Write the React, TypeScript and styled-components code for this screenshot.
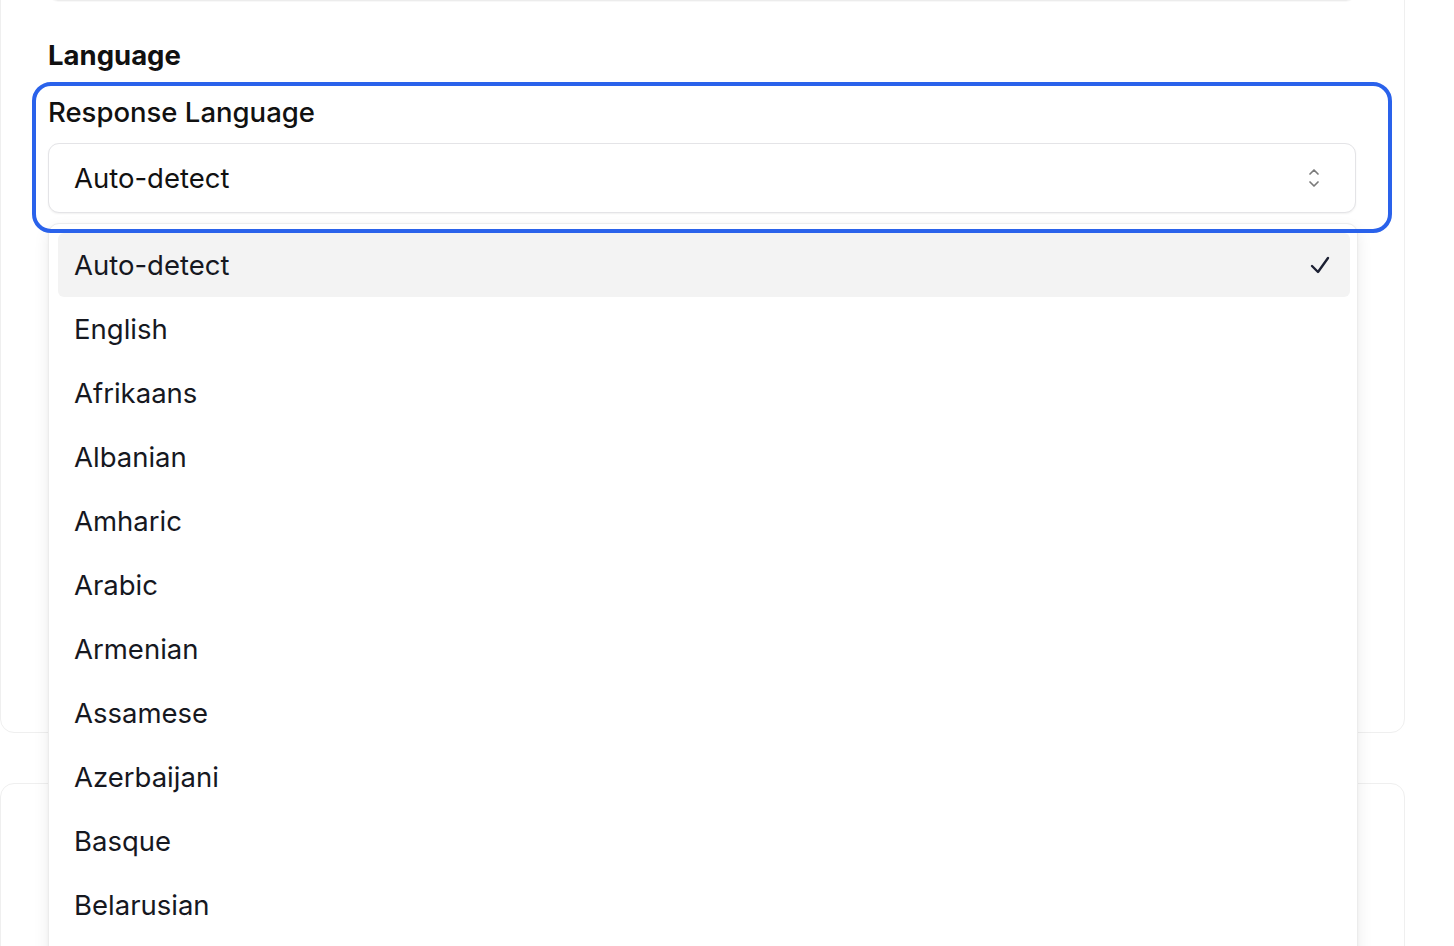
import React from "react";
import styled, { createGlobalStyle } from "styled-components";

const GlobalStyle = createGlobalStyle`
  html, body {
    margin: 0;
    padding: 0;
    background: #ffffff;
    overflow: hidden;
    font-family: Inter, "Noto Sans", "Liberation Sans", sans-serif;
    -webkit-font-smoothing: antialiased;
  }
  * { box-sizing: border-box; }
`;

const Page = styled.div`
  display: flex;
  flex-direction: column;
  gap: 50px;
  padding-right: 49px;
`;

const Card = styled.section<{ $pullUp?: number; $minHeight?: number }>`
  position: relative;
  margin-top: ${(p) => (p.$pullUp ? -p.$pullUp : 0)}px;
  min-height: ${(p) => p.$minHeight ?? 0}px;
  border: 1px solid #efefef;
  border-radius: 14px;
  background: #ffffff;
  padding: 0 48px 0 47px;
  display: flex;
  flex-direction: column;
`;

const PrevInput = styled.div`
  margin-top: 40px;
  height: 60px;
  border: 1px solid #ececec;
  border-radius: 10px;
  box-shadow: 0 1px 1px rgba(0, 0, 0, 0.03);
`;

const SectionTitle = styled.h3`
  margin: 39px 0 0;
  height: 30px;
  line-height: 30px;
  font-size: 27.5px;
  font-weight: 700;
  color: #111111;
`;

const FieldGroup = styled.div`
  position: relative;
  margin: 12px -36px 0 -16px;
  padding: 15px 36px 20px 16px;
  display: flex;
  flex-direction: column;
  gap: 16px;

  &::after {
    content: "";
    position: absolute;
    inset: 0;
    border: 4px solid #2a62eb;
    border-radius: 19px;
    pointer-events: none;
    z-index: 2;
  }
`;

const FieldLabel = styled.label`
  height: 30px;
  line-height: 30px;
  font-size: 27.5px;
  font-weight: 500;
  color: #111111;
`;

const SelectWrap = styled.div`
  position: relative;
`;

const SelectTrigger = styled.button`
  width: 100%;
  height: 70px;
  display: flex;
  align-items: center;
  justify-content: space-between;
  padding: 0 35px 0 25px;
  background: #ffffff;
  border: 1.5px solid #e4e4e7;
  border-radius: 11px;
  box-shadow: 0 1px 2px rgba(0, 0, 0, 0.06);
  font-family: inherit;
  font-size: 27.5px;
  line-height: 30px;
  font-weight: 400;
  color: #111111;
  text-align: left;
`;

const Listbox = styled.ul`
  position: absolute;
  top: calc(100% + 10px);
  left: 0;
  right: -2px;
  z-index: 1;
  min-height: 760px;
  margin: 0;
  padding: 9px 7px 9px 9px;
  list-style: none;
  background: #ffffff;
  border: 1px solid #ececec;
  border-radius: 11px;
  box-shadow: 0 6px 16px rgba(0, 0, 0, 0.08), 0 1px 3px rgba(0, 0, 0, 0.04);
`;

const OptionRow = styled.li<{ $selected?: boolean }>`
  height: 64px;
  display: flex;
  align-items: center;
  justify-content: space-between;
  padding: 0 20px 1px 16px;
  border-radius: 6px;
  background: ${(p) => (p.$selected ? "#f3f3f3" : "transparent")};
  font-size: 27.5px;
  line-height: 30px;
  color: #16181f;
`;

const ChevronsIcon = () => (
  <svg width="12" height="22" viewBox="0 0 12 22" fill="none" aria-hidden>
    <path d="M2 7 L6 3 L10 7" stroke="#7a7a7a" strokeWidth="1.7" strokeLinecap="round" strokeLinejoin="round" />
    <path d="M2 15 L6 19 L10 15" stroke="#7a7a7a" strokeWidth="1.7" strokeLinecap="round" strokeLinejoin="round" />
  </svg>
);

const CheckIcon = () => (
  <svg width="20" height="18" viewBox="0 0 20 18" fill="none" aria-hidden>
    <path d="M2 10 L8 16 L18 2" stroke="#1c2033" strokeWidth="2.4" strokeLinecap="round" strokeLinejoin="round" />
  </svg>
);

const languages = [
  "Auto-detect",
  "English",
  "Afrikaans",
  "Albanian",
  "Amharic",
  "Arabic",
  "Armenian",
  "Assamese",
  "Azerbaijani",
  "Basque",
  "Belarusian",
];

export default function App() {
  const selected = "Auto-detect";
  return (
    <>
      <GlobalStyle />
      <Page>
        <Card $pullUp={100} $minHeight={833}>
          <PrevInput />
          <SectionTitle>Language</SectionTitle>
          <FieldGroup>
            <FieldLabel>Response Language</FieldLabel>
            <SelectWrap>
              <SelectTrigger type="button">
                <span>{selected}</span>
                <ChevronsIcon />
              </SelectTrigger>
              <Listbox role="listbox">
                {languages.map((lang) => (
                  <OptionRow key={lang} role="option" $selected={lang === selected}>
                    <span>{lang}</span>
                    {lang === selected && <CheckIcon />}
                  </OptionRow>
                ))}
              </Listbox>
            </SelectWrap>
          </FieldGroup>
        </Card>
        <Card $minHeight={400} />
      </Page>
    </>
  );
}
